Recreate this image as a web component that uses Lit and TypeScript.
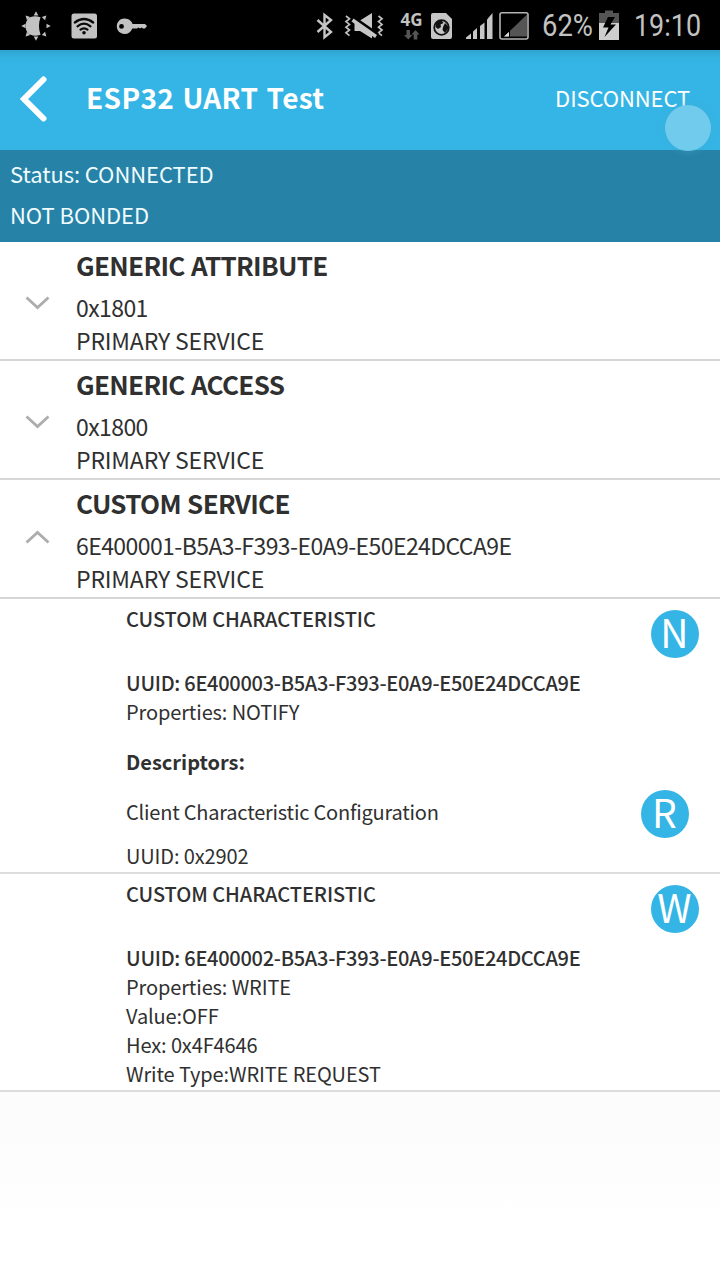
import { LitElement, html, css, svg, nothing } from "lit";
import { customElement, property } from "lit/decorators.js";

interface Characteristic {
  uuid: string;
  lines: string[];
  action: string;
  descriptor?: { name: string; uuid: string; action: string };
}

interface Service {
  name: string;
  uuid: string;
  open: boolean;
}

const SERVICES: Service[] = [
  { name: "GENERIC ATTRIBUTE", uuid: "0x1801", open: false },
  { name: "GENERIC ACCESS", uuid: "0x1800", open: false },
  { name: "CUSTOM SERVICE", uuid: "6E400001-B5A3-F393-E0A9-E50E24DCCA9E", open: true },
];

const CHARACTERISTICS: Characteristic[] = [
  {
    uuid: "6E400003-B5A3-F393-E0A9-E50E24DCCA9E",
    lines: ["Properties: NOTIFY"],
    action: "N",
    descriptor: { name: "Client Characteristic Configuration", uuid: "0x2902", action: "R" },
  },
  {
    uuid: "6E400002-B5A3-F393-E0A9-E50E24DCCA9E",
    lines: ["Properties: WRITE", "Value:OFF", "Hex: 0x4F4646", "Write Type:WRITE REQUEST"],
    action: "W",
  },
];

@customElement("status-bar")
export class StatusBar extends LitElement {
  static styles = css`
    :host {
      display: block;
      height: 50px;
      background: #000;
    }
    svg {
      display: block;
    }
    text {
      font-family: Roboto, sans-serif;
      fill: #c2c2c2;
    }
    .net {
      font-family: "Open Sans", sans-serif;
      font-weight: 700;
    }
  `;

  render() {
    const rays = [45, 90, 135, 180, 225, 270, 315, 0];
    return html`<svg width="720" height="50" viewBox="0 0 720 50">
      <g fill="#c2c2c2">
        ${rays.map((a) => svg`<path d="M33.700 15.500L36 11.300L38.300 15.500Z" transform="rotate(${a} 36 26)" />`)}
        <path d="M40.500 17.200C30 14 25.500 20 25.500 26C25.500 32 30 38 40.500 34.800Q37.500 26 40.500 17.200Z" />
        <rect x="71.500" y="13.500" width="25.500" height="25" rx="2.500" />
        <path fill-rule="evenodd" d="M124.500 18.500C129 18.500 132 21.500 132.500 24H145L147 26L145 28.500H143L141.500 27.500L140 28.500L138.500 27.500L137 28.500H132.300C131 32 128.500 34 124.500 34C120 34 116.800 30.500 116.800 26.300C116.800 22 120 18.500 124.500 18.500ZM121.500 24A2.400 2.400 0 1 0 121.500 28.800A2.400 2.400 0 1 0 121.500 24Z" />
      </g>
      <g fill="none" stroke="#0a0a0a" stroke-width="2.200" stroke-linecap="round">
        <path d="M74.800 22.500Q84 15.500 93.200 22.500" />
        <path d="M77.500 26.300Q84 21 90.500 26.300" />
        <path d="M80.500 29.700Q84 27 87.500 29.700" />
      </g>
      <circle cx="84" cy="32.700" r="1.800" fill="#0a0a0a" />
      <path d="M317.500 20L331 32L324.500 37.300V15L331 20L317.500 32" fill="none" stroke="#c6c6c6" stroke-width="2.400" />
      <g fill="none" stroke="#c2c2c2" stroke-width="1.700">
        <path d="M346 16L349.500 18.800L346 21.600L349.500 24.400L346 27.200L349.500 30L346 32.800L349.500 35.600" />
        <path d="M378.500 16L382 18.800L378.500 21.600L382 24.400L378.500 27.200L382 30L378.500 32.800L382 35.600" />
      </g>
      <path d="M354.500 20.500H360L372 13V38.500L360 31H354.500Z" fill="#c6c6c6" />
      <path d="M353 17L378 34.500" stroke="#000" stroke-width="3" />
      <path d="M352.500 20L376 36.500" stroke="#c6c6c6" stroke-width="3.400" />
      <text class="net" x="400.500" y="25.500" font-size="17" textLength="22" lengthAdjust="spacingAndGlyphs">4G</text>
      <g fill="#565656">
        <path d="M406.500 30H410V35H412.500L408.300 39.500L404 35H406.500Z" />
        <path d="M413.700 39.500V34.500H411.500L415.500 30L419.500 34.500H417.300V39.500Z" />
      </g>
      <path d="M433 13H446L452 19V37Q452 39 450 39H433Q431 39 431 37V15Q431 13 433 13Z" fill="#c6c6c6" />
      <circle cx="441.500" cy="27.500" r="7.300" fill="none" stroke="#111" stroke-width="1.800" />
      <path d="M436 23Q439 20 442 21L443.500 23L440.500 24.500L441 27L438 29L435.500 27ZM445 23L448 26V29L445 33L442.500 30L443 27Z" fill="#111" />
      <g fill="#c6c6c6">
        <path d="M466 39V37.500L471 33.500V39Z" />
        <path d="M473 39V31.500L477 28V39Z" />
        <path d="M480 39V26L484.500 22.500V39Z" />
        <path d="M487 39V19.500L492.500 13V39Z" />
      </g>
      <rect x="500" y="12.800" width="28" height="26.200" rx="2" fill="none" stroke="#b4b4b4" stroke-width="1.600" />
      <path d="M504 36.500L527 14.500V36.500Z" fill="#555" />
      <path d="M504 36.500L509 32V36.500Z" fill="#e0e0e0" />
      <path d="M509.500 31V37" stroke="#000" stroke-width="1" />
      <text x="542" y="36.300" font-size="31" font-weight="400" textLength="51" lengthAdjust="spacingAndGlyphs">62%</text>
      <path d="M599 13H605V10.500H613V13H619V23H599Z" fill="#555" />
      <rect x="599" y="23" width="20" height="17" fill="#cecece" />
      <path d="M608 17L603 27.500H608.500L604.500 37L616 24.500H610.500L615 17Z" fill="#000" />
      <text x="634" y="36.300" font-size="31" font-weight="400" textLength="67" lengthAdjust="spacingAndGlyphs">19:10</text>
    </svg>`;
  }
}

@customElement("action-badge")
export class ActionBadge extends LitElement {
  @property() letter = "";

  static styles = css`
    :host {
      display: block;
      flex: none;
      width: 48.500px;
      height: 48.500px;
      border-radius: 50%;
      background: #34b5e5;
      color: #fff;
      font-size: 39px;
      line-height: 43px;
      text-align: center;
      text-indent: -1px;
    }
  `;

  render() {
    return html`${this.letter}`;
  }
}

@customElement("service-row")
export class ServiceRow extends LitElement {
  @property({ attribute: false }) service!: Service;

  static styles = css`
    :host {
      display: flex;
      box-sizing: border-box;
      height: 119px;
      border-bottom: 2px solid #d6d6d6;
    }
    .arrow {
      flex: none;
      width: 76px;
      padding: 53px 0 0 25px;
      box-sizing: border-box;
    }
    .open {
      padding-top: 50px;
    }
    svg {
      display: block;
    }
    .name {
      font-size: 26px;
      font-weight: 700;
      line-height: 44px;
      margin: 1px 0 4px;
      letter-spacing: -0.68px;
      word-spacing: 1px;
    }
    .line {
      font-size: 23px;
      line-height: 33px;
      letter-spacing: -0.18px;
    }
    .uuid {
      letter-spacing: -0.58px;
    }
    .name,
    .line {
      white-space: nowrap;
    }
  `;

  render() {
    const s = this.service;
    return html`<div class="arrow ${s.open ? "open" : ""}">
        <svg width="25" height="15" viewBox="0 0 25 15">
          <path d=${s.open ? "M1.500 12.500L12.500 2.500L23.500 12.500" : "M1.500 2.500L12.500 12.500L23.500 2.500"} fill="none" stroke="#adadad" stroke-width="2.800" />
        </svg>
      </div>
      <div>
        <div class="name">${s.name}</div>
        <div class="line uuid">${s.uuid}</div>
        <div class="line">PRIMARY SERVICE</div>
      </div>`;
  }
}

@customElement("characteristic-row")
export class CharacteristicRow extends LitElement {
  @property({ attribute: false }) item!: Characteristic;

  static styles = css`
    :host {
      display: block;
      padding: 5px 21px 2px 126px;
      border-bottom: 2px solid #dcdcdc;
      font-size: 20px;
      line-height: 29px;
      letter-spacing: -0.12px;
      white-space: nowrap;
    }
    .head {
      display: flex;
      justify-content: space-between;
      height: 64px;
    }
    .head action-badge {
      margin-top: 5.500px;
    }
    .strong {
      font-weight: 500;
      letter-spacing: -0.06px;
    }
    .uuid {
      letter-spacing: -0.28px;
    }
    .bold {
      font-weight: 700;
      letter-spacing: 0;
      margin-top: 21px;
    }
    .descriptor {
      display: flex;
      justify-content: space-between;
      margin: 13.500px 10px 0 0;
    }
    .name {
      margin: 7.500px 0 15px;
      letter-spacing: -0.21px;
    }
  `;

  render() {
    const c = this.item;
    const d = c.descriptor;
    return html`<div class="head">
        <div class="strong">CUSTOM CHARACTERISTIC</div>
        <action-badge .letter=${c.action}></action-badge>
      </div>
      <div class="strong uuid">UUID: ${c.uuid}</div>
      ${c.lines.map((l) => html`<div>${l}</div>`)}
      ${d
        ? html`<div class="bold">Descriptors:</div>
            <div class="descriptor">
              <div>
                <div class="name">${d.name}</div>
                <div>UUID: ${d.uuid}</div>
              </div>
              <action-badge .letter=${d.action}></action-badge>
            </div>`
        : nothing}`;
  }
}

@customElement("app-root")
export class AppRoot extends LitElement {
  static styles = css`
    :host {
      display: flex;
      flex-direction: column;
      position: relative;
      width: 720px;
      height: 1280px;
      overflow: hidden;
      background: #fff;
      color: #303030;
      font-family: "Noto Sans CJK SC", "Noto Sans", sans-serif;
    }
    .header {
      display: flex;
      align-items: center;
      flex: none;
      height: 100px;
      box-sizing: border-box;
      padding: 0 30px 2px 20px;
      background: linear-gradient(#2fa5d0, #33b2e1 8px, #34b5e5 16px);
      color: #fff;
    }
    .back {
      display: block;
      margin-right: 39px;
    }
    .title {
      flex: 1;
      font-size: 28px;
      font-weight: 700;
      line-height: 40px;
      padding-bottom: 4px;
      letter-spacing: 0.36px;
      word-spacing: 1.500px;
    }
    .action {
      font-size: 22px;
      line-height: 40px;
      padding-bottom: 4px;
      letter-spacing: -0.1px;
    }
    .state {
      flex: none;
      height: 92px;
      box-sizing: border-box;
      padding: 3px 10px;
      background: #2682a6;
      color: #f0fcff;
      font-size: 22px;
      line-height: 41px;
      letter-spacing: -0.06px;
    }
    .rest {
      flex: 1;
      background: linear-gradient(#fcfcfc 50px, #fff 130px);
    }
    .touch {
      position: absolute;
      left: 665px;
      top: 105px;
      width: 46px;
      height: 46px;
      border-radius: 50%;
      background: #70cbed;
      box-shadow: 0 0 6px 2px rgba(70, 170, 210, 0.35);
    }
  `;

  render() {
    return html`<status-bar></status-bar>
      <div class="header">
        <svg class="back" width="27" height="46" viewBox="0 0 27 46">
          <path d="M23.500 3.500L4 23L23.500 42.500" fill="none" stroke="#fff" stroke-width="6" stroke-linecap="round" />
        </svg>
        <div class="title">ESP32 UART Test</div>
        <div class="action">DISCONNECT</div>
      </div>
      <div class="state">
        <div>Status: CONNECTED</div>
        <div>NOT BONDED</div>
      </div>
      ${SERVICES.map((s) => html`<service-row .service=${s}></service-row>`)}
      ${CHARACTERISTICS.map((c) => html`<characteristic-row .item=${c}></characteristic-row>`)}
      <div class="rest"></div>
      <div class="touch"></div>`;
  }
}
